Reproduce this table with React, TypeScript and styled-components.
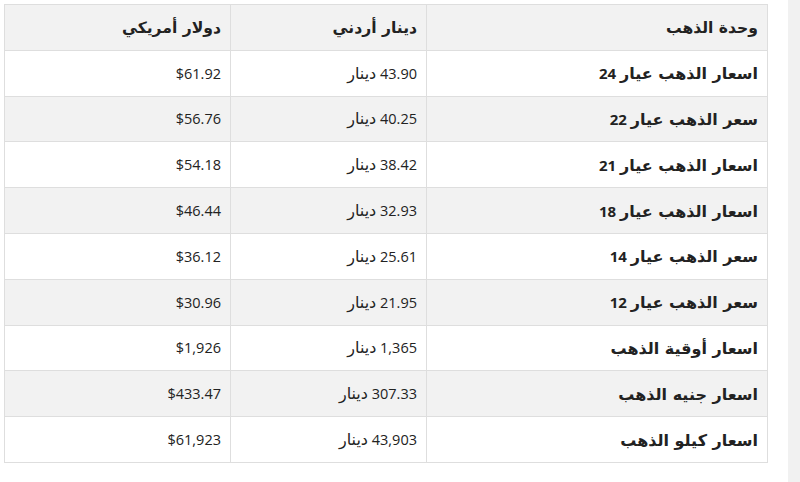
import React from "react";
import styled, { createGlobalStyle } from "styled-components";

const Global = createGlobalStyle`
  html, body { margin: 0; padding: 0; background: #fff; }
  body { font-family: "Open Sans", "DejaVu Sans", sans-serif; }
`;

const Page = styled.div`
  display: flex;
  height: 482px;
  width: 800px;
  overflow: hidden;
`;

const Content = styled.div`
  flex: 0 0 768px;
  box-sizing: border-box;
  padding: 4px 0 0 4px;
`;

const Scroll = styled.div`
  margin-left: auto;
  width: 12px;
  height: 100%;
  background: #f1f1f1;
`;

const Table = styled.table`
  width: 763px;
  border-collapse: collapse;
  direction: rtl;
  table-layout: fixed;
  color: #222;
  font-size: 14.5px;
`;

const Col = styled.col<{ $w: number }>`
  width: ${(p) => p.$w}px;
`;

const Row = styled.tr<{ $shade: boolean }>`
  height: 45.8px;
  background: ${(p) => (p.$shade ? "#f2f2f2" : "#fff")};
`;

const Head = styled.th`
  border: 1px solid #dedede;
  text-align: right;
  padding: 0 9px;
  font-weight: 700;
  font-size: 15px;
  white-space: nowrap;
`;

const Cell = styled.td<{ $bold?: boolean }>`
  border: 1px solid #dedede;
  text-align: right;
  padding: 0 9px;
  font-weight: ${(p) => (p.$bold ? 700 : 400)};
  font-size: ${(p) => (p.$bold ? "15px" : "14.5px")};
  white-space: nowrap;
`;

const Ar = styled.span<{ $size?: number }>`
  font-family: "DejaVu Sans", sans-serif;
  font-size: ${(p) => p.$size ?? 16}px;
`;

const Num = styled.span`
  font-family: "Open Sans", sans-serif;
`;

const Usd = styled.span`
  font-family: "Open Sans", sans-serif;
  direction: ltr;
  unicode-bidi: isolate;
`;

const rows: [string, string, string, string, string][] = [
  ["اسعار الذهب عيار", "24", "43.90", "دينار", "$61.92"],
  ["سعر الذهب عيار", "22", "40.25", "دينار", "$56.76"],
  ["اسعار الذهب عيار", "21", "38.42", "دينار", "$54.18"],
  ["اسعار الذهب عيار", "18", "32.93", "دينار", "$46.44"],
  ["سعر الذهب عيار", "14", "25.61", "دينار", "$36.12"],
  ["سعر الذهب عيار", "12", "21.95", "دينار", "$30.96"],
  ["اسعار أوقية الذهب", "", "1,365", "دينار", "$1,926"],
  ["اسعار جنيه الذهب", "", "307.33", "دينار", "$433.47"],
  ["اسعار كيلو الذهب", "", "43,903", "دينار", "$61,923"],
];

export default function App() {
  return (
    <>
      <Global />
      <Page>
        <Content>
          <Table>
            <colgroup>
              <Col $w={341} />
              <Col $w={196} />
              <Col $w={226} />
            </colgroup>
            <thead>
              <Row $shade>
                <Head><Ar $size={15.6}>وحدة الذهب</Ar></Head>
                <Head><Ar $size={15.6}>دينار أردني</Ar></Head>
                <Head><Ar $size={15.6}>دولار أمريكي</Ar></Head>
              </Row>
            </thead>
            <tbody>
              {rows.map((r, i) => (
                <Row key={i} $shade={i % 2 === 1}>
                  <Cell $bold>
                    <Ar>{r[0]}</Ar>
                    {r[1] && <> <Num>{r[1]}</Num></>}
                  </Cell>
                  <Cell>
                    <Num>{r[2]}</Num> <Ar>{r[3]}</Ar>
                  </Cell>
                  <Cell>
                    <Usd>{r[4]}</Usd>
                  </Cell>
                </Row>
              ))}
            </tbody>
          </Table>
        </Content>
        <Scroll />
      </Page>
    </>
  );
}
